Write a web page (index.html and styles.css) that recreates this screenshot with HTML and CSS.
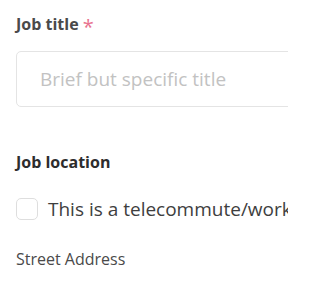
FILE: index.html
```html
<!DOCTYPE html>
<html>
<head>
<meta charset="utf-8">
<link rel="stylesheet" href="styles.css">
</head>
<body>
<div class="form">
  <label class="label" for="title">Job title <span class="req">*</span></label>
  <input class="input" id="title" type="text" placeholder="Brief but specific title">
  <div class="section">Job location</div>
  <label class="check">
    <span class="box"></span>
    <span class="check-text">This is a telecommute/work from home position</span>
  </label>
  <div class="field-label">Street Address</div>
</div>
</body>
</html>
```
FILE: styles.css
```css
html, body {
  margin: 0;
  padding: 0;
  overflow: hidden;
  background: #fff;
}
body {
  font-family: "Open Sans", "Noto Sans", sans-serif;
  width: 288px;
  height: 288px;
}
.form {
  padding: 12px 0 0 16px;
  display: flex;
  flex-direction: column;
  width: 340px;
}
.label {
  font-size: 16px;
  font-weight: 700;
  color: #4a4a4a;
  line-height: 24px;
}
.req {
  color: #e8738f;
  font-weight: 400;
  font-size: 20px;
  line-height: 16px;
  vertical-align: -4px;
}
.input {
  margin-top: 15px;
  height: 56px;
  box-sizing: border-box;
  border: 1px solid #e4e4e4;
  border-radius: 5px;
  padding: 0 0 0 23px;
  font-family: inherit;
  font-size: 19px;
  color: #333;
  outline: none;
  width: 340px;
}
.input::placeholder {
  color: #c2c2c2;
}
.section {
  margin-top: 43px;
  font-size: 16px;
  font-weight: 700;
  color: #2d2d2d;
  line-height: 24px;
}
.check {
  margin-top: 23px;
  display: flex;
  align-items: center;
  gap: 10px;
  white-space: nowrap;
  overflow: hidden;
  width: 272px;
}
.box {
  width: 22px;
  height: 22px;
  box-sizing: border-box;
  border: 1px solid #dedede;
  border-radius: 5px;
  flex: none;
}
.check-text {
  font-size: 19px;
  color: #3e3e3e;
  line-height: 24px;
}
.field-label {
  margin-top: 26px;
  font-size: 16px;
  color: #4a4a4a;
  line-height: 24px;
}
```
